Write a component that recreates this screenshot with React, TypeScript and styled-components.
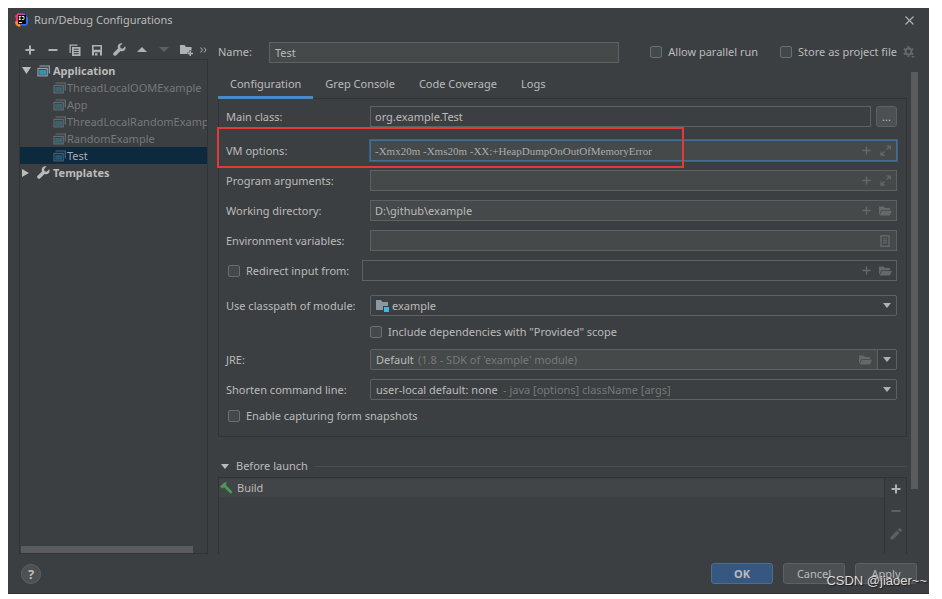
import React, { useState } from "react";
import styled, { createGlobalStyle, css } from "styled-components";

const c = {
  bg: "#3c3f41",
  field: "#45494a",
  border: "#5e6162",
  line: "#313335",
  text: "#bbbbbb",
  dim: "#777879",
  icon: "#afb1b3",
  iconOff: "#64696c",
  bar: "#595b5d",
  select: "#0d293e",
  accent: "#4a88c7",
};

const Global = createGlobalStyle`
  * { box-sizing: border-box; }
  body {
    margin: 0;
    background: #ffffff;
    color: ${c.text};
    font: 11px/16px "Noto Sans", "Open Sans", sans-serif;
  }
  button, input, select { font: inherit; color: inherit; margin: 0; }
  svg { display: block; flex: none; }
`;

const Page = styled.div`
  display: flex;
  min-height: 100vh;
  padding: 8px 13px 5px 8px;
`;

const Dialog = styled.main`
  position: relative;
  flex: 1;
  min-width: 0;
  display: flex;
  flex-direction: column;
  background: ${c.bg};
  border-bottom: 1px solid #2d2f31;
`;

const TitleBar = styled.header`
  display: flex;
  align-items: center;
  height: 24px;
  padding: 0 15px 0 7px;
  gap: 5px;
`;

const Title = styled.h1`
  flex: 1;
  margin: 0;
  font-size: 11px;
  font-weight: 400;
`;

const IconButton = styled.button`
  display: grid;
  place-items: center;
  flex: none;
  padding: 0;
  border: 0;
  background: none;
  color: ${(p) => (p.disabled ? "#5d6062" : c.icon)};
`;

const Columns = styled.div`
  flex: 1;
  display: flex;
  gap: 10px;
  padding: 0 11px;
`;

const Sidebar = styled.aside`
  width: 189px;
  flex: none;
  display: flex;
  flex-direction: column;
  padding-top: 8px;
`;

const Toolbar = styled.div`
  display: grid;
  grid-template-columns: repeat(8, 1fr) 10px;
  align-items: center;
  height: 19px;
`;

const TreeBox = styled.div`
  flex: 1;
  display: flex;
  flex-direction: column;
  justify-content: space-between;
  border: 1px solid ${c.line};
  padding-top: 2px;
  overflow: hidden;
`;

const Tree = styled.ul`
  margin: 0;
  padding: 0;
  list-style: none;
`;

const TreeRow = styled.li<{ $child?: boolean; $selected?: boolean }>`
  display: flex;
  align-items: center;
  height: 17px;
  gap: 3px;
  padding-left: 2px;
  white-space: nowrap;
  font-weight: 700;
  ${(p) =>
    p.$child &&
    css`
      padding-left: 33px;
      gap: 1px;
      font-weight: 400;
      color: ${p.$selected ? "#a9acae" : c.dim};
      svg { opacity: 0.45; }
    `}
  ${(p) => p.$selected && css`background: ${c.select};`}
`;

const Arrow = styled.span`
  width: 10px;
  margin-right: 2px;
`;

const HScroll = styled.div`
  width: 172px;
  height: 7px;
  margin-left: 1px;
  background: ${c.bar};
`;

const Content = styled.section`
  flex: 1;
  min-width: 0;
  display: flex;
  flex-direction: column;
`;

const NameRow = styled.div`
  display: flex;
  align-items: center;
  height: 40px;
  gap: 9px;
`;

const NameLabel = styled.label`
  width: 42px;
`;

const NameInput = styled.input`
  flex: 1;
  min-width: 0;
  height: 21px;
  padding: 0 5px;
  background: ${c.field};
  border: 1px solid ${c.border};
  outline: 0;
`;

const Options = styled.div`
  display: flex;
  align-items: center;
  padding-left: 22px;
  gap: 22px;
`;

const Pair = styled.div`
  display: flex;
  align-items: center;
  gap: 6px;
  margin-right: 3px;
`;

const CheckLabel = styled.label`
  display: inline-flex;
  align-items: center;
  gap: 6px;
  white-space: nowrap;
`;

const Check = styled.input`
  appearance: none;
  width: 12px;
  height: 12px;
  flex: none;
  border: 1px solid #6b6e70;
  border-radius: 2px;
  background: #43494a;
  &:checked { background: ${c.accent}; }
`;

const Body = styled.div`
  flex: 1;
  display: flex;
  gap: 4px;
`;

const Scrolled = styled.div`
  flex: 1;
  min-width: 0;
  display: flex;
  flex-direction: column;
`;

const VScroll = styled.div`
  width: 7px;
  height: 417px;
  background: ${c.bar};
`;

const Tabs = styled.div`
  display: flex;
  height: 27px;
  border-bottom: 1px solid ${c.line};
`;

const Tab = styled.button<{ $active?: boolean }>`
  height: 27px;
  padding: 0 12px;
  border: 0;
  border-bottom: 3px solid ${(p) => (p.$active ? c.accent : "transparent")};
  background: none;
`;

const Form = styled.div`
  display: flex;
  flex-direction: column;
  padding: 7px 9px 12px 7px;
  border: 1px solid ${c.line};
  border-top: 0;
`;

const Row = styled.div<{ $top?: number }>`
  position: relative;
  display: flex;
  align-items: center;
  margin-top: ${(p) => p.$top ?? 9}px;
`;

const Label = styled.label`
  width: 144px;
  flex: none;
  white-space: nowrap;
`;

const RedirectLabel = styled(CheckLabel)`
  width: 134px;
  margin-left: 2px;
`;

const Indented = styled(Row)<{ $left: number }>`
  padding-left: ${(p) => p.$left}px;
`;

const Field = styled.div<{ $plain?: boolean; $focus?: boolean }>`
  flex: 1;
  min-width: 0;
  display: flex;
  align-items: center;
  height: 21px;
  gap: 7px;
  padding-right: 5px;
  background: ${(p) => (p.$plain ? c.bg : c.field)};
  border: 1px solid ${c.border};
  ${(p) => p.$focus && css`border-color: #466d94; box-shadow: 0 0 0 1px #3d6185;`}
`;

const TextInput = styled.input<{ $code?: boolean }>`
  flex: 1;
  min-width: 0;
  height: 100%;
  padding: 0 4px;
  border: 0;
  outline: 0;
  background: none;
  ${(p) => p.$code && css`font-family: "Liberation Serif", serif; color: #a9acae;`}
`;

const FieldIcon = styled(IconButton)`
  width: 12px;
  color: ${c.iconOff};
`;

const Combo = styled.div<{ $filled?: boolean }>`
  flex: 1;
  min-width: 0;
  display: grid;
  grid-template-columns: 16px auto 1fr auto 19px;
  align-items: center;
  height: 21px;
  background: ${(p) => (p.$filled ? c.field : c.bg)};
  border: 1px solid ${c.border};
  border-radius: 2px;
  & > * { grid-row: 1; }
`;

const Select = styled.select<{ $left: number }>`
  appearance: none;
  grid-column: 1 / -1;
  width: 100%;
  height: 19px;
  padding: 0 20px 0 ${(p) => p.$left}px;
  border: 0;
  outline: 0;
  background: none;
`;

const ComboIcon = styled.span`
  grid-column: 1;
  padding-left: 5px;
  pointer-events: none;
`;

const Hint = styled.span<{ $left: number }>`
  grid-column: 1 / 4;
  padding-left: ${(p) => p.$left}px;
  color: ${c.dim};
  white-space: nowrap;
  pointer-events: none;
`;

const BrowseSlot = styled.span`
  grid-column: 4;
  padding-right: 6px;
`;

const Chevron = styled.span<{ $split?: boolean }>`
  grid-column: 5;
  display: grid;
  place-items: center;
  height: 19px;
  pointer-events: none;
  color: ${c.icon};
  ${(p) => p.$split && css`background: ${c.bg}; border-left: 1px solid ${c.border};`}
`;

const Browse = styled.button`
  width: 21px;
  height: 21px;
  margin-left: 5px;
  padding: 0;
  border: 1px solid ${c.border};
  border-radius: 3px;
  background: #4c5052;
`;

const Highlight = styled.div`
  position: absolute;
  left: -9px;
  right: 213px;
  top: -13px;
  bottom: -7px;
  border: 2px solid #e23a3a;
  pointer-events: none;
`;

const BeforeHead = styled.div`
  display: flex;
  align-items: center;
  gap: 7px;
  margin-top: 21px;
  padding-left: 3px;
`;

const Rule = styled.hr`
  flex: 1;
  margin: 0;
  border: 0;
  border-top: 1px solid #4b4e50;
`;

const BeforeBox = styled.div`
  flex: 1;
  display: flex;
  margin-top: 3px;
  border: 1px solid ${c.line};
  border-bottom: 0;
`;

const TaskList = styled.ul`
  flex: 1;
  margin: 0;
  padding: 1px 0 0;
  list-style: none;
  border-right: 1px solid ${c.line};
`;

const Task = styled.li`
  display: flex;
  align-items: center;
  height: 18px;
  padding-left: 1px;
  gap: 4px;
  background: #424547;
`;

const TaskTools = styled.div`
  width: 21px;
  display: flex;
  flex-direction: column;
  align-items: center;
  gap: 12px;
  padding-top: 6px;
`;

const Footer = styled.footer`
  display: flex;
  align-items: center;
  justify-content: flex-end;
  height: 39px;
  gap: 10px;
  padding: 0 12px 0 13px;
`;

const Help = styled.button`
  width: 20px;
  height: 20px;
  margin-right: auto;
  padding: 0;
  border: 1px solid ${c.border};
  border-radius: 50%;
  background: #4c5052;
  font-weight: 700;
  font-size: 13px;
  line-height: 16px;
`;

const Button = styled.button<{ $primary?: boolean }>`
  width: 62px;
  height: 21px;
  padding: 0;
  border: 1px solid ${(p) => (p.$primary ? "#4c708c" : c.border)};
  border-radius: 3px;
  background: ${(p) => (p.$primary ? "#365880" : "#4c5052")};
  font-weight: ${(p) => (p.$primary ? 700 : 400)};
`;

const Watermark = styled.div`
  position: absolute;
  right: 2px;
  bottom: 3px;
  font: 13px/18px "Liberation Sans", sans-serif;
  color: #dcdcdc;
  text-shadow: 1px 1px 1px #1c1c1c;
  pointer-events: none;
`;

const Logo = () => (
  <svg width="14" height="14" viewBox="0 0 14 14">
    <path d="M0 3 3 0l6 1-2 6-5 6-2-3 1-4z" fill="#f0356f" />
    <path d="M8 1h2l3 4 0 6-3 2-5-1 6-5z" fill="#2f6df2" />
    <path d="m0 9 3-1 3 5-2 1-3-2z" fill="#f98a2c" />
    <path d="m7 0 3 1-1 2H6z" fill="#9a4be0" />
    <rect x="3" y="2" width="8" height="9" fill="#0a0a0a" />
    <path d="M3.800 3.500h2M4.800 3.500v3M3.800 6.500h2M6.800 3.500h2.200v2.200q0 .9-.9.9H6.900M4 9.500h3" stroke="#fff" strokeWidth=".9" fill="none" />
  </svg>
);
const Plus = ({ s = 10, w = 2 }: { s?: number; w?: number }) => (
  <svg width={s} height={s} viewBox="0 0 10 10" stroke="currentColor" strokeWidth={w}>
    <path d="M5 .5v9M.5 5h9" />
  </svg>
);
const Minus = () => (
  <svg width="10" height="10" viewBox="0 0 10 10" stroke="currentColor" strokeWidth="2">
    <path d="M.5 5h9" />
  </svg>
);
const Copy = () => (
  <svg width="12" height="12" viewBox="0 0 12 12" fill="currentColor">
    <path d="M.5.5h8v1.300H1.800V9H.5z" />
    <path fillRule="evenodd" d="M3 3h8.500v9H3zm1.700 1.800v1h5v-1zm0 2.200v1h5V7zm0 2.200v1h5v-1z" />
  </svg>
);
const Save = () => (
  <svg width="12" height="12" viewBox="0 0 12 12" fill="currentColor">
    <path fillRule="evenodd" d="M1 1h10v10.500H9V8.200H3v3.300H1zm1.600 1.500v3.200h6.800V2.500zM4 9.200h2.500v2.300H4z" />
  </svg>
);
const Wrench = () => (
  <svg width="13" height="13" viewBox="0 0 24 24" fill="currentColor">
    <path d="M22.500 6.200 18 10.500l-4-1-1-4L17.500 1C13-.5 8 2.500 8.800 8.500c0 .8.200 1.200.3 1.600L1.200 18c-2.900 3 1.800 7.700 4.800 4.800l7.900-7.900C20 16.800 25 12 22.500 6.200z" />
  </svg>
);
const Tri = ({ d, w = 10, h = 6 }: { d: "up" | "down" | "right"; w?: number; h?: number }) => (
  <svg width={w} height={h} viewBox="0 0 10 10" preserveAspectRatio="none" fill="currentColor">
    <path d={d === "up" ? "M0 10 5 0l5 10z" : d === "down" ? "M0 0h10L5 10z" : "M0 0v10l10-5z"} />
  </svg>
);
const FolderAdd = () => (
  <svg width="13" height="12" viewBox="0 0 13 12" fill="currentColor">
    <path d="M0 1h4.500L6 3h5.500v3.500H9v2H7V10H0z" />
    <path d="M9.500 7H11v1.700h2v1.500h-2V12H9.500v-1.800h-2V8.700h2z" />
  </svg>
);
const More = () => (
  <svg width="7" height="6" viewBox="0 0 7 6" fill="none" stroke="currentColor">
    <path d="m.5.500 2 2.500-2 2.500M4 .5 6 3 4 5.500" />
  </svg>
);
const Close = () => (
  <svg width="9" height="9" viewBox="0 0 9 9" stroke="currentColor" strokeWidth="1.100">
    <path d="m.5.500 8 8M8.500.500l-8 8" />
  </svg>
);
const AppIcon = () => (
  <svg width="13" height="12" viewBox="0 0 13 12" fill="none">
    <path d="M2.500 1h9.800v7.500" stroke="#9aa7b0" strokeWidth="1.200" />
    <rect x="1" y="3.400" width="9.200" height="7.500" stroke="#9aa7b0" strokeWidth="1.100" />
    <rect x="2.200" y="4.800" width="7" height="5" fill="#3592b4" />
  </svg>
);
const Gear = () => (
  <svg width="12" height="12" viewBox="0 0 12 12" fill="none" stroke="#64676a">
    <circle cx="5.500" cy="5.500" r="2.900" strokeWidth="2" />
    <path d="M5.500 0v2M5.500 9v2M.7 2.800l1.800 1M8.500 7.300l1.800 1M.7 8.300l1.800-1M8.500 3.800l1.800-1" strokeWidth="1.900" />
    <path d="M8 10h4l-2 2z" fill="#64676a" stroke="none" />
  </svg>
);
const Expand = () => (
  <svg width="11" height="11" viewBox="0 0 11 11" fill="none" stroke="currentColor" strokeWidth="1.200">
    <path d="M6.500 1h3.800v3.800M10 1.200 6.500 4.700M4.800 10.200H1V6.500M1.200 10l3.300-3.500" />
  </svg>
);
const OpenFolder = () => (
  <svg width="13" height="10" viewBox="0 0 13 10" fill="currentColor">
    <path d="M0 .5h4.500L6 2h5v2H2.500L.300 8.500H0z" />
    <path d="M3 4.800h10L10.800 9.500H.700z" />
  </svg>
);
const ListIcon = () => (
  <svg width="10" height="12" viewBox="0 0 10 12" fill="none" stroke="currentColor">
    <rect x="1" y=".8" width="8" height="10.400" strokeWidth="1.400" />
    <path d="M3 3.800h4M3 5.800h4M3 7.800h4" />
  </svg>
);
const Module = () => (
  <svg width="14" height="12" viewBox="0 0 14 12">
    <path d="M0 0h5l1.500 2H12v4H7v4H0z" fill="#8c979f" />
    <rect x="8" y="7" width="5" height="5" fill="#40b6e0" />
  </svg>
);
const Hammer = () => (
  <svg width="13" height="12" viewBox="0 0 13 12">
    <path d="M0 4.500 4.500.500 7 .200 5.700 2.800 12.500 10l-1.800 1.800L4 5.200 2.300 6.500z" fill="#499c54" />
  </svg>
);
const Pencil = () => (
  <svg width="12" height="12" viewBox="0 0 12 12" fill="currentColor">
    <path d="M.5 9 7 2.500 9.500 5 3 11.500H.500zM7.700 1.800 9.200.300q.5-.4 1 0l1.500 1.500q.4.500 0 1L10.200 4.300z" />
  </svg>
);

const treeItems = ["ThreadLocalOOMExample", "App", "ThreadLocalRandomExample", "RandomExample", "Test"];
const tabNames = ["Configuration", "Grep Console", "Code Coverage", "Logs"];

export default function App() {
  const [tab, setTab] = useState(0);
  const [selected, setSelected] = useState(4);
  return (
    <>
      <Global />
      <Page>
        <Dialog>
          <TitleBar>
            <Logo />
            <Title>Run/Debug Configurations</Title>
            <IconButton aria-label="Close"><Close /></IconButton>
          </TitleBar>
          <Columns>
            <Sidebar>
              <Toolbar>
                <IconButton aria-label="Add"><Plus /></IconButton>
                <IconButton aria-label="Remove"><Minus /></IconButton>
                <IconButton aria-label="Copy"><Copy /></IconButton>
                <IconButton aria-label="Save"><Save /></IconButton>
                <IconButton aria-label="Edit templates"><Wrench /></IconButton>
                <IconButton aria-label="Move up"><Tri d="up" h={5} /></IconButton>
                <IconButton aria-label="Move down" disabled><Tri d="down" h={5} /></IconButton>
                <IconButton aria-label="New folder"><FolderAdd /></IconButton>
                <IconButton aria-label="More"><More /></IconButton>
              </Toolbar>
              <TreeBox>
                <Tree>
                  <TreeRow><Arrow><Tri d="down" w={9} h={7} /></Arrow><AppIcon />Application</TreeRow>
                  {treeItems.map((name, i) => (
                    <TreeRow key={name} $child $selected={i === selected} onClick={() => setSelected(i)}>
                      <AppIcon />{name}
                    </TreeRow>
                  ))}
                  <TreeRow><Arrow><Tri d="right" w={7} h={8} /></Arrow><Wrench />Templates</TreeRow>
                </Tree>
                <HScroll />
              </TreeBox>
            </Sidebar>
            <Content>
              <NameRow>
                <NameLabel htmlFor="name">Name:</NameLabel>
                <NameInput id="name" defaultValue="Test" />
                <Options>
                  <CheckLabel><Check type="checkbox" />Allow parallel run</CheckLabel>
                  <Pair>
                    <CheckLabel><Check type="checkbox" />Store as project file</CheckLabel>
                    <IconButton aria-label="Storage settings"><Gear /></IconButton>
                  </Pair>
                </Options>
              </NameRow>
              <Body>
                <Scrolled>
                  <Tabs role="tablist">
                    {tabNames.map((name, i) => (
                      <Tab key={name} role="tab" aria-selected={i === tab} $active={i === tab} onClick={() => setTab(i)}>
                        {name}
                      </Tab>
                    ))}
                  </Tabs>
                  <Form>
                    <Row $top={0}>
                      <Label htmlFor="main">Main class:</Label>
                      <Field $plain><TextInput id="main" defaultValue="org.example.Test" /></Field>
                      <Browse aria-label="Browse main class">...</Browse>
                    </Row>
                    <Row $top={13}>
                      <Label htmlFor="vm">VM options:</Label>
                      <Field $focus>
                        <TextInput id="vm" $code defaultValue="-Xmx20m -Xms20m -XX:+HeapDumpOnOutOfMemoryError" />
                        <FieldIcon aria-label="Insert macro"><Plus s={9} w={1.5} /></FieldIcon>
                        <FieldIcon aria-label="Expand"><Expand /></FieldIcon>
                      </Field>
                      <Highlight />
                    </Row>
                    <Row>
                      <Label htmlFor="args">Program arguments:</Label>
                      <Field>
                        <TextInput id="args" />
                        <FieldIcon aria-label="Insert macro"><Plus s={9} w={1.5} /></FieldIcon>
                        <FieldIcon aria-label="Expand"><Expand /></FieldIcon>
                      </Field>
                    </Row>
                    <Row>
                      <Label htmlFor="dir">Working directory:</Label>
                      <Field>
                        <TextInput id="dir" defaultValue="D:\github\example" />
                        <FieldIcon aria-label="Insert macro"><Plus s={9} w={1.5} /></FieldIcon>
                        <FieldIcon aria-label="Browse"><OpenFolder /></FieldIcon>
                      </Field>
                    </Row>
                    <Row>
                      <Label htmlFor="env">Environment variables:</Label>
                      <Field>
                        <TextInput id="env" />
                        <FieldIcon aria-label="Edit variables"><ListIcon /></FieldIcon>
                      </Field>
                    </Row>
                    <Row>
                      <RedirectLabel><Check type="checkbox" />Redirect input from:</RedirectLabel>
                      <Field $plain>
                        <TextInput aria-label="Input file" />
                        <FieldIcon aria-label="Insert macro"><Plus s={9} w={1.5} /></FieldIcon>
                        <FieldIcon aria-label="Browse"><OpenFolder /></FieldIcon>
                      </Field>
                    </Row>
                    <Row $top={14}>
                      <Label htmlFor="module">Use classpath of module:</Label>
                      <Combo>
                        <Select id="module" $left={21}><option>example</option></Select>
                        <ComboIcon><Module /></ComboIcon>
                        <Chevron><Tri d="down" w={8} h={5} /></Chevron>
                      </Combo>
                    </Row>
                    <Indented $top={8} $left={144}>
                      <CheckLabel><Check type="checkbox" />Include dependencies with "Provided" scope</CheckLabel>
                    </Indented>
                    <Row>
                      <Label htmlFor="jre">JRE:</Label>
                      <Combo $filled>
                        <Select id="jre" $left={5}><option>Default</option></Select>
                        <Hint $left={47}>(1.8 - SDK of 'example' module)</Hint>
                        <BrowseSlot><FieldIcon aria-label="Browse JRE"><OpenFolder /></FieldIcon></BrowseSlot>
                        <Chevron $split><Tri d="down" w={8} h={5} /></Chevron>
                      </Combo>
                    </Row>
                    <Row>
                      <Label htmlFor="shorten">Shorten command line:</Label>
                      <Combo>
                        <Select id="shorten" $left={5}><option>user-local default: none</option></Select>
                        <Hint $left={132}>- java [options] className [args]</Hint>
                        <Chevron><Tri d="down" w={8} h={5} /></Chevron>
                      </Combo>
                    </Row>
                    <Indented $top={8} $left={2}>
                      <CheckLabel><Check type="checkbox" />Enable capturing form snapshots</CheckLabel>
                    </Indented>
                  </Form>
                  <BeforeHead>
                    <Tri d="down" w={8} h={5} />
                    Before launch
                    <Rule />
                  </BeforeHead>
                  <BeforeBox>
                    <TaskList>
                      <Task><Hammer />Build</Task>
                    </TaskList>
                    <TaskTools>
                      <IconButton aria-label="Add task"><Plus /></IconButton>
                      <IconButton aria-label="Remove task" disabled><Minus /></IconButton>
                      <IconButton aria-label="Edit task" disabled><Pencil /></IconButton>
                    </TaskTools>
                  </BeforeBox>
                </Scrolled>
                <VScroll />
              </Body>
            </Content>
          </Columns>
          <Footer>
            <Help aria-label="Help">?</Help>
            <Button $primary>OK</Button>
            <Button>Cancel</Button>
            <Button>Apply</Button>
          </Footer>
          <Watermark>CSDN @jiaoer~~</Watermark>
        </Dialog>
      </Page>
    </>
  );
}
